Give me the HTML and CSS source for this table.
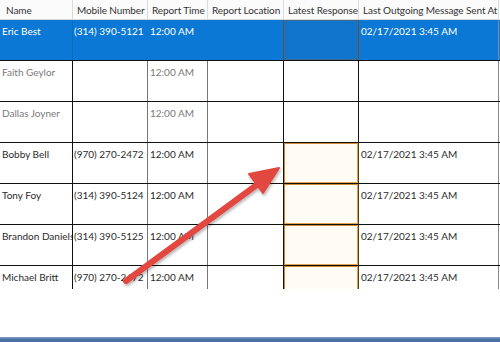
FILE: index.html
```html
<!DOCTYPE html>
<html>
<head>
<meta charset="utf-8">
<link rel="stylesheet" href="styles.css">
</head>
<body>
<div class="screen">
  <div class="grid">
    <div class="row head">
      <div class="c c1">Name</div>
      <div class="c c2">Mobile Number</div>
      <div class="c c3">Report Time</div>
      <div class="c c4">Report Location</div>
      <div class="c c5">Latest Response</div>
      <div class="c c6">Last Outgoing Message Sent At</div>
    </div>
    <div class="row sel">
      <div class="c c1">Eric Best</div>
      <div class="c c2">(314) 390-5121</div>
      <div class="c c3">12:00 AM</div>
      <div class="c c4"></div>
      <div class="c c5 focus"></div>
      <div class="c c6">02/17/2021 3:45 AM</div>
    </div>
    <div class="row dim">
      <div class="c c1">Faith Geylor</div>
      <div class="c c2"></div>
      <div class="c c3">12:00 AM</div>
      <div class="c c4"></div>
      <div class="c c5"></div>
      <div class="c c6"></div>
    </div>
    <div class="row dim">
      <div class="c c1">Dallas Joyner</div>
      <div class="c c2"></div>
      <div class="c c3">12:00 AM</div>
      <div class="c c4"></div>
      <div class="c c5"></div>
      <div class="c c6"></div>
    </div>
    <div class="row">
      <div class="c c1">Bobby Bell</div>
      <div class="c c2">(970) 270-2472</div>
      <div class="c c3">12:00 AM</div>
      <div class="c c4"></div>
      <div class="c c5 edit"></div>
      <div class="c c6">02/17/2021 3:45 AM</div>
    </div>
    <div class="row">
      <div class="c c1">Tony Foy</div>
      <div class="c c2">(314) 390-5124</div>
      <div class="c c3">12:00 AM</div>
      <div class="c c4"></div>
      <div class="c c5 edit"></div>
      <div class="c c6">02/17/2021 3:45 AM</div>
    </div>
    <div class="row">
      <div class="c c1">Brandon Daniels</div>
      <div class="c c2">(314) 390-5125</div>
      <div class="c c3">12:00 AM</div>
      <div class="c c4"></div>
      <div class="c c5 edit"></div>
      <div class="c c6">02/17/2021 3:45 AM</div>
    </div>
    <div class="row last">
      <div class="c c1">Michael Britt</div>
      <div class="c c2">(970) 270-2472</div>
      <div class="c c3">12:00 AM</div>
      <div class="c c4"></div>
      <div class="c c5 edit"></div>
      <div class="c c6">02/17/2021 3:45 AM</div>
    </div>
  </div>
  <div class="spacer"></div>
  <div class="bar"></div>
  <svg class="arrow" width="500" height="342" viewBox="0 0 500 342">
    <defs>
      <filter id="sh" x="-20%" y="-20%" width="140%" height="140%">
        <feDropShadow dx="1" dy="2" stdDeviation="1.5" flood-color="#000" flood-opacity="0.3"/>
      </filter>
    </defs>
    <g filter="url(#sh)" fill="#e2463f" stroke="#e2463f">
      <line x1="126" y1="281" x2="258" y2="184" stroke-width="6" stroke-linecap="round"/>
      <polygon points="279,168 249,174 263,193" stroke-width="2" stroke-linejoin="round"/>
    </g>
  </svg>
</div>
</body>
</html>
```
FILE: styles.css
```css
html, body {
  margin: 0;
  padding: 0;
  background: #ffffff;
}
.screen {
  position: relative;
  width: 500px;
  height: 342px;
  display: flex;
  flex-direction: column;
  overflow: hidden;
  font-family: "Lato", "Liberation Sans", sans-serif;
  font-size: 10px;
  color: #2b2b2b;
}
.grid {
  height: 289px;
  overflow: hidden;
  display: flex;
  flex-direction: column;
  flex: none;
}
.row {
  display: flex;
  height: 40px;
  border-bottom: 1px solid #111;
  flex: none;
}
.row.last {
  border-bottom: none;
}
.c {
  box-sizing: border-box;
  border-right: 1px solid #111;
  padding: 4px 0 0 2px;
  white-space: nowrap;
  overflow: hidden;
  line-height: 14px;
}
.c1 { width: 73px; }
.c2 { width: 75px; border-right-color: #777; }
.c3 { width: 60px; border-right-color: #777; }
.c4 { width: 76px; border-right-color: #111; }
.c5 { width: 75px; }
.c6 { width: 140px; border-right-color: #888; }
.row .c2 { padding-left: 1px; }

.head {
  height: 19px;
  background: #fbfbfb;
  border-bottom: 1px solid #d8d8d8;
}
.head .c {
  border-right: 1px solid #dcdcdc;
  padding: 3px 0 0 4px;
  color: #333;
  letter-spacing: -0.1px;
}
.head .c1 { padding-left: 6px; }
.head .c6 { border-right-color: #dcdcdc; }

.sel {
  background: #0a78d4;
  color: #ffffff;
}
.sel .c { border-right-color: #0a78d4; }
.sel .c1 { border-right-color: #0a6cc0; }
.sel .c4 { border-right-color: #555; }
.sel .c5.focus {
  background: #0f75cc;
  border-right-color: #555;
  box-shadow: inset 0 0 0 1px #3d6a95;
}
.sel .c6 { border-right-color: #888; }

.dim { color: #7a7a7a; }

.c5.edit {
  background: #fffcf5;
  border-right-color: #5a3a10;
  box-shadow: inset 1px 0 0 #c88a3a, inset -1px 0 0 #e0a050, inset 0 1px 0 #d08a30, inset 0 -1px 0 #e0a050;
}

.spacer {
  flex: 1;
}
.bar {
  height: 5px;
  flex: none;
  background: linear-gradient(#8ea8cc, #4d72a6 40%, #4a6fa3);
}
.arrow {
  position: absolute;
  left: 0;
  top: 0;
  pointer-events: none;
}
```
